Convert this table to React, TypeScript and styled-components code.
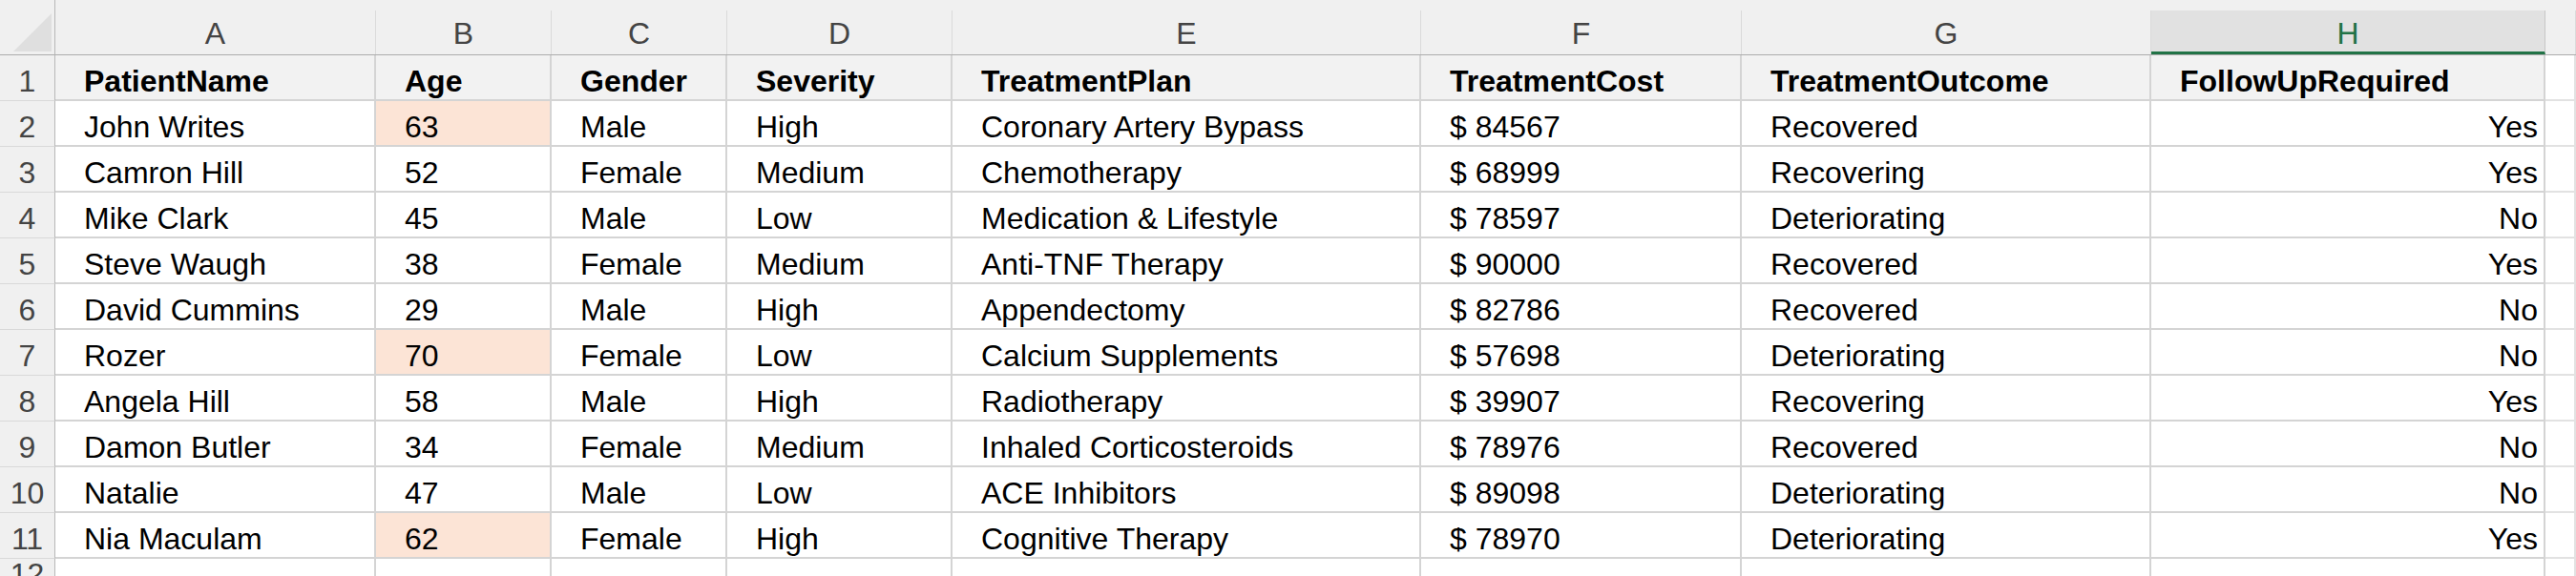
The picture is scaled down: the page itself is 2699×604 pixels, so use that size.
import React from "react";
import styled, { createGlobalStyle, css } from "styled-components";

const GlobalStyle = createGlobalStyle`
  html, body {
    margin: 0;
    padding: 0;
    background: #f0f0f0;
    overflow: hidden;
  }
  body {
    font-family: "Liberation Sans", Arial, sans-serif;
  }
`;

type Row = {
  name: string;
  age: number;
  gender: string;
  severity: string;
  plan: string;
  cost: number;
  outcome: string;
  followUp: string;
};

const rows: Row[] = [
  { name: "John Writes", age: 63, gender: "Male", severity: "High", plan: "Coronary Artery Bypass", cost: 84567, outcome: "Recovered", followUp: "Yes" },
  { name: "Camron Hill", age: 52, gender: "Female", severity: "Medium", plan: "Chemotherapy", cost: 68999, outcome: "Recovering", followUp: "Yes" },
  { name: "Mike Clark", age: 45, gender: "Male", severity: "Low", plan: "Medication & Lifestyle", cost: 78597, outcome: "Deteriorating", followUp: "No" },
  { name: "Steve Waugh", age: 38, gender: "Female", severity: "Medium", plan: "Anti-TNF Therapy", cost: 90000, outcome: "Recovered", followUp: "Yes" },
  { name: "David Cummins", age: 29, gender: "Male", severity: "High", plan: "Appendectomy", cost: 82786, outcome: "Recovered", followUp: "No" },
  { name: "Rozer", age: 70, gender: "Female", severity: "Low", plan: "Calcium Supplements", cost: 57698, outcome: "Deteriorating", followUp: "No" },
  { name: "Angela Hill", age: 58, gender: "Male", severity: "High", plan: "Radiotherapy", cost: 39907, outcome: "Recovering", followUp: "Yes" },
  { name: "Damon Butler", age: 34, gender: "Female", severity: "Medium", plan: "Inhaled Corticosteroids", cost: 78976, outcome: "Recovered", followUp: "No" },
  { name: "Natalie", age: 47, gender: "Male", severity: "Low", plan: "ACE Inhibitors", cost: 89098, outcome: "Deteriorating", followUp: "No" },
  { name: "Nia Maculam", age: 62, gender: "Female", severity: "High", plan: "Cognitive Therapy", cost: 78970, outcome: "Deteriorating", followUp: "Yes" },
];

const columns = [
  { letter: "A", width: 336, title: "PatientName" },
  { letter: "B", width: 184, title: "Age" },
  { letter: "C", width: 184, title: "Gender" },
  { letter: "D", width: 236, title: "Severity" },
  { letter: "E", width: 491, title: "TreatmentPlan" },
  { letter: "F", width: 336, title: "TreatmentCost" },
  { letter: "G", width: 429, title: "TreatmentOutcome" },
  { letter: "H", width: 413, title: "FollowUpRequired" },
];

const Sheet = styled.div`
  display: grid;
  grid-template-columns: 58px ${columns.map((c) => `${c.width}px`).join(" ")} 1fr;
  grid-template-rows: 58px repeat(11, 48px) 1fr;
  width: 2699px;
  height: 604px;
  overflow: hidden;
  font-family: "Liberation Sans", Arial, sans-serif;
  font-size: 32px;
  line-height: 32px;
  color: #000;
  background: #fff;
`;

const Corner = styled.div`
  box-sizing: border-box;
  background: #f0f0f0;
  border-right: 1px solid #b8b8b8;
  border-bottom: 1px solid #acacac;
  display: flex;
  align-items: flex-end;
  justify-content: flex-end;
  padding: 0 3px 3px 0;
`;

const ColHeaderCell = styled.div`
  box-sizing: border-box;
  background: #f0f0f0;
  border-bottom: 1px solid #acacac;
  display: flex;
  flex-direction: column;
  justify-content: flex-end;
`;

const ColLabel = styled.div<{ $selected?: boolean }>`
  box-sizing: border-box;
  height: 46px;
  display: flex;
  align-items: flex-end;
  justify-content: center;
  padding-bottom: 6px;
  color: #444;
  border-right: 1px solid #dadada;
  ${(p) =>
    p.$selected &&
    css`
      background: #e1e1e1;
      color: #217346;
      border-right: 1px solid #c6c6c6;
      border-bottom: 3px solid #217346;
      padding-bottom: 3px;
    `}
`;

const RowHeader = styled.div`
  box-sizing: border-box;
  background: #f0f0f0;
  border-right: 1px solid #b8b8b8;
  border-bottom: 1px solid #d9d9d9;
  display: flex;
  align-items: flex-end;
  justify-content: center;
  padding-bottom: 4px;
  color: #444;
`;

const Cell = styled.div<{ $head?: boolean; $right?: boolean; $flag?: boolean }>`
  box-sizing: border-box;
  border-right: 2px solid #d4d4d4;
  border-bottom: 2px solid #d4d4d4;
  display: flex;
  align-items: flex-end;
  justify-content: ${(p) => (p.$right ? "flex-end" : "flex-start")};
  padding: ${(p) => (p.$right ? "0 6px 3px 0" : "0 0 3px 30px")};
  white-space: nowrap;
  overflow: hidden;
  background: ${(p) => (p.$flag ? "#fce4d6" : p.$head ? "#f2f2f2" : "#ffffff")};
  font-weight: ${(p) => (p.$head ? 700 : 400)};
`;

const BlankCell = styled.div`
  box-sizing: border-box;
  border-right: 2px solid #e2e2e2;
  border-bottom: 2px solid #e2e2e2;
  background: #fff;
`;

const CornerMark = () => (
  <svg width="40" height="40" viewBox="0 0 40 40">
    <polygon points="40,0 40,40 0,40" fill="#dfdfdf" />
  </svg>
);

export default function App() {
  const dataRows: (string | number)[][] = rows.map((r) => [
    r.name,
    r.age,
    r.gender,
    r.severity,
    r.plan,
    `$ ${r.cost}`,
    r.outcome,
    r.followUp,
  ]);

  return (
    <>
      <GlobalStyle />
      <Sheet>
        <Corner>
          <CornerMark />
        </Corner>
        {columns.map((c) => (
          <ColHeaderCell key={c.letter}>
            <ColLabel $selected={c.letter === "H"}>{c.letter}</ColLabel>
          </ColHeaderCell>
        ))}
        <ColHeaderCell>
          <ColLabel />
        </ColHeaderCell>

        <RowHeader>1</RowHeader>
        {columns.map((c) => (
          <Cell key={c.letter} $head>
            {c.title}
          </Cell>
        ))}
        <BlankCell />

        {dataRows.map((vals, i) => (
          <React.Fragment key={i}>
            <RowHeader>{i + 2}</RowHeader>
            {vals.map((v, j) => (
              <Cell
                key={j}
                $right={j === 7}
                $flag={j === 1 && typeof v === "number" && v > 60}
              >
                {v}
              </Cell>
            ))}
            <BlankCell />
          </React.Fragment>
        ))}

        <RowHeader>12</RowHeader>
        {columns.map((c) => (
          <Cell key={c.letter} />
        ))}
        <BlankCell />
      </Sheet>
    </>
  );
}
